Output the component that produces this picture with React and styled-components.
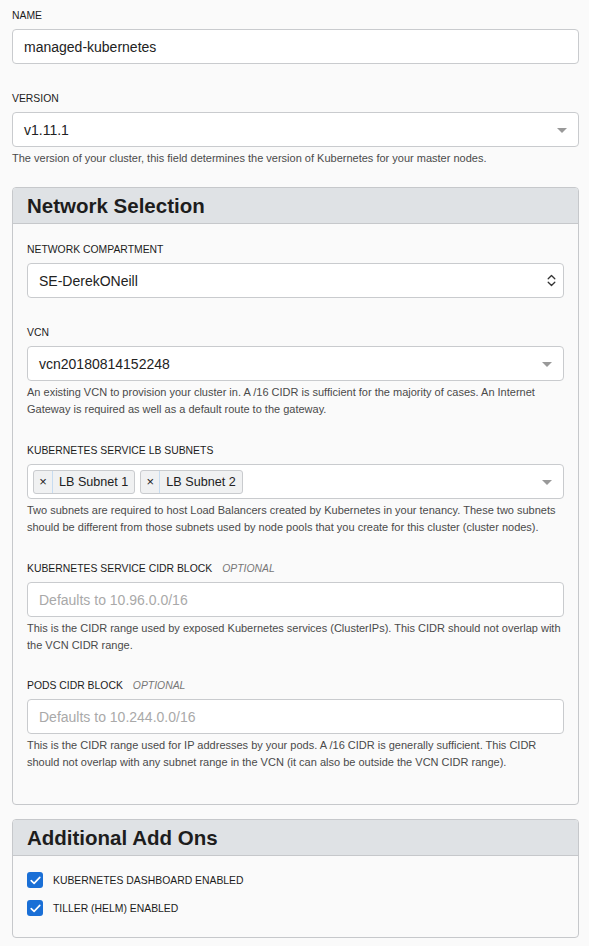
import React from "react";
import styled, { createGlobalStyle } from "styled-components";

const Global = createGlobalStyle`
  html, body { margin: 0; padding: 0; background: #fafafa; }
  body { font-family: "Liberation Sans", Arial, sans-serif; color: #222; }
  * { box-sizing: border-box; }
`;

const Page = styled.div`
  width: 589px;
  padding: 9px 10px 8px 12px;
  display: flex;
  flex-direction: column;
`;

const Field = styled.div`
  display: flex;
  flex-direction: column;
  margin-bottom: ${(p) => p.$mb ?? 28}px;
`;

const Label = styled.div`
  font-size: 10.4px;
  line-height: 13px;
  color: #1c1c1c;
  text-transform: uppercase;
  margin-bottom: 7px;
`;

const Optional = styled.span`
  font-style: italic;
  color: #777;
  margin-left: 10px;
`;

const Box = styled.div`
  position: relative;
  height: 35px;
  background: #fff;
  border: 1px solid #c9cbce;
  border-radius: 4px;
  display: flex;
  align-items: center;
  padding: 0 11px;
  font-size: 14px;
  color: ${(p) => (p.$placeholder ? "#a9a9a9" : "#222")};
`;

const TagBox = styled(Box)`
  padding: 0 5px;
  gap: 5px;
`;

const Arrow = styled.span`
  position: absolute;
  right: 11px;
  top: 50%;
  margin-top: -2px;
  width: 0;
  height: 0;
  border-left: 5px solid transparent;
  border-right: 5px solid transparent;
  border-top: 5px solid #999;
`;

const UpDown = styled.svg`
  position: absolute;
  right: 7px;
  top: 50%;
  margin-top: -6.5px;
`;

const Help = styled.div`
  font-size: 11px;
  line-height: 17px;
  color: #4a4a4a;
  margin-top: 3px;
`;

const Panel = styled.section`
  border: 1px solid #c6c8cb;
  border-radius: 4px;
  background: #fafafa;
  margin-bottom: ${(p) => p.$mb ?? 0}px;
  overflow: hidden;
`;

const PanelHeader = styled.div`
  height: 36px;
  background: #dfe2e5;
  border-bottom: 1px solid #c6c8cb;
  display: flex;
  align-items: center;
  padding: 0 14px;
  font-size: 20.5px;
  font-weight: 700;
  color: #1d1d1d;
`;

const PanelBody = styled.div`
  padding: ${(p) => p.$pad};
`;

const Tag = styled.div`
  height: 24px;
  display: flex;
  align-items: stretch;
  background: #f0f1f2;
  border: 1px solid #c9cbce;
  border-radius: 3px;
  font-size: 12.6px;
  color: #222;
`;

const TagX = styled.span`
  width: 19px;
  display: flex;
  align-items: center;
  justify-content: center;
  font-size: 13px;
  border-right: 1px solid #c7dcf0;
`;

const TagText = styled.span`
  display: flex;
  align-items: center;
  padding: 0 6px;
`;

const CheckRow = styled.label`
  height: 28px;
  display: flex;
  align-items: center;
  gap: 10px;
  font-size: 10.4px;
  color: #1c1c1c;
  text-transform: uppercase;
`;

const Check = styled.span`
  width: 16px;
  height: 16px;
  border-radius: 3px;
  background: #1a6fd6;
  display: flex;
  align-items: center;
  justify-content: center;
`;

const CheckIcon = () => (
  <svg width="11" height="9" viewBox="0 0 11 9">
    <path d="M1.2 4.6 L4.1 7.4 L9.8 1.4" fill="none" stroke="#fff" strokeWidth="1.6" strokeLinecap="round" strokeLinejoin="round" />
  </svg>
);

export default function App() {
  return (
    <>
      <Global />
      <Page>
        <Field $mb={28}>
          <Label>Name</Label>
          <Box>managed-kubernetes</Box>
        </Field>
        <Field $mb={20}>
          <Label>Version</Label>
          <Box>
            v1.11.1
            <Arrow />
          </Box>
          <Help>The version of your cluster, this field determines the version of Kubernetes for your master nodes.</Help>
        </Field>

        <Panel $mb={14}>
          <PanelHeader>Network Selection</PanelHeader>
          <PanelBody $pad="19px 14px 33px 14px">
            <Field $mb={28}>
              <Label>Network Compartment</Label>
              <Box>
                SE-DerekONeill
                <UpDown width="9" height="13" viewBox="0 0 9 13">
                  <path d="M1.2 4.8 L4.5 1.5 L7.8 4.8 M1.2 8.2 L4.5 11.5 L7.8 8.2" fill="none" stroke="#333" strokeWidth="1.3" strokeLinecap="round" strokeLinejoin="round" />
                </UpDown>
              </Box>
            </Field>
            <Field $mb={26}>
              <Label>VCN</Label>
              <Box>
                vcn20180814152248
                <Arrow />
              </Box>
              <Help>
                An existing VCN to provision your cluster in. A /16 CIDR is sufficient for the majority of cases. An Internet Gateway is required as well as a default route to the gateway.
              </Help>
            </Field>
            <Field $mb={26}>
              <Label>Kubernetes Service LB Subnets</Label>
              <TagBox>
                <Tag>
                  <TagX>×</TagX>
                  <TagText>LB Subnet 1</TagText>
                </Tag>
                <Tag>
                  <TagX>×</TagX>
                  <TagText>LB Subnet 2</TagText>
                </Tag>
                <Arrow />
              </TagBox>
              <Help>
                Two subnets are required to host Load Balancers created by Kubernetes in your tenancy. These two subnets should be different from those subnets used by node pools that you create for this cluster (cluster nodes).
              </Help>
            </Field>
            <Field $mb={25}>
              <Label>
                Kubernetes Service CIDR Block<Optional>OPTIONAL</Optional>
              </Label>
              <Box $placeholder>Defaults to 10.96.0.0/16</Box>
              <Help>
                This is the CIDR range used by exposed Kubernetes services (ClusterIPs). This CIDR should not overlap with the VCN CIDR range.
              </Help>
            </Field>
            <Field $mb={0}>
              <Label>
                Pods CIDR Block<Optional>OPTIONAL</Optional>
              </Label>
              <Box $placeholder>Defaults to 10.244.0.0/16</Box>
              <Help>
                This is the CIDR range used for IP addresses by your pods. A /16 CIDR is generally sufficient. This CIDR should not overlap with any subnet range in the VCN (it can also be outside the VCN CIDR range).
              </Help>
            </Field>
          </PanelBody>
        </Panel>

        <Panel>
          <PanelHeader>Additional Add Ons</PanelHeader>
          <PanelBody $pad="10px 14px 15px 14px">
            <CheckRow>
              <Check><CheckIcon /></Check>
              Kubernetes Dashboard Enabled
            </CheckRow>
            <CheckRow>
              <Check><CheckIcon /></Check>
              Tiller (Helm) Enabled
            </CheckRow>
          </PanelBody>
        </Panel>
      </Page>
    </>
  );
}
